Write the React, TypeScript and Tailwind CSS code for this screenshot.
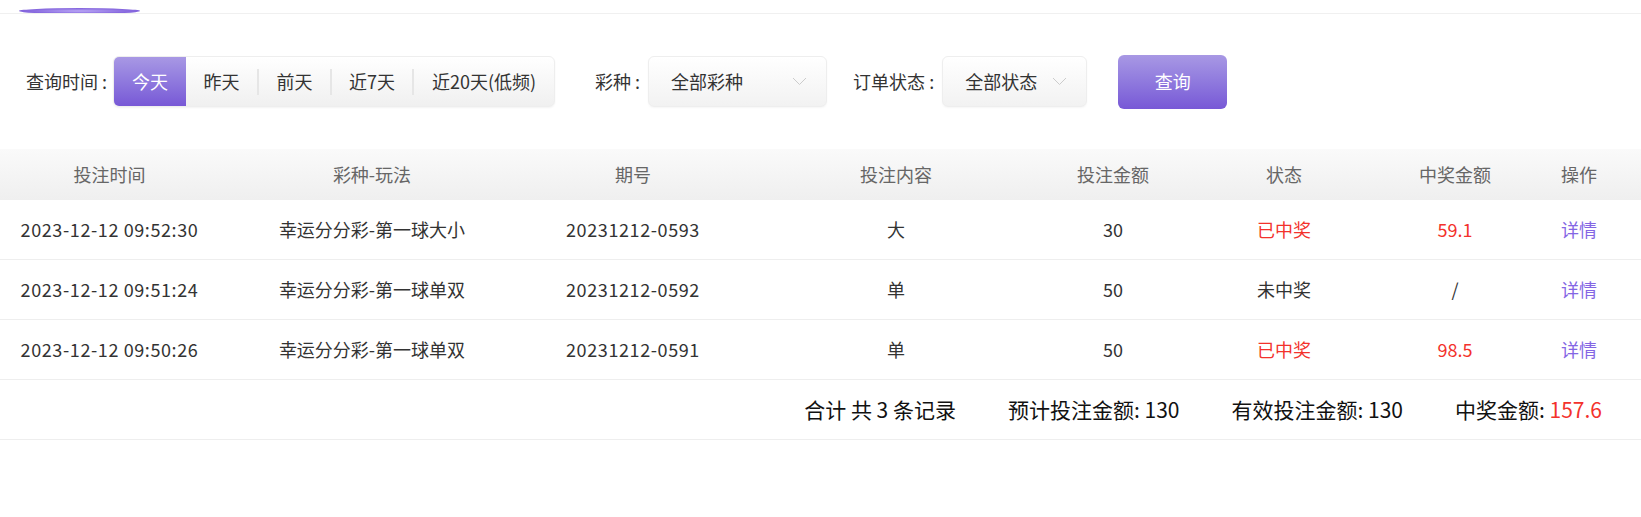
import { useState } from 'react'

const ranges = ['今天', '昨天', '前天', '近7天', '近20天(低频)']
const rangeW = ['w-[72px]', 'w-[71px]', 'w-[71px]', 'w-[80px]', 'w-[140px]']

const cols = [
  { title: '投注时间', w: 'w-[219px]' },
  { title: '彩种-玩法', w: 'w-[306px]' },
  { title: '期号', w: 'w-[216px]' },
  { title: '投注内容', w: 'w-[310px]' },
  { title: '投注金额', w: 'w-[124px]' },
  { title: '状态', w: 'w-[218px]' },
  { title: '中奖金额', w: 'w-[124px]' },
  { title: '操作', w: 'w-[124px]' },
]

const rows = [
  { time: '2023-12-12 09:52:30', game: '幸运分分彩-第一球大小', issue: '20231212-0593', content: '大', amount: '30', won: true, prize: '59.1' },
  { time: '2023-12-12 09:51:24', game: '幸运分分彩-第一球单双', issue: '20231212-0592', content: '单', amount: '50', won: false, prize: '/' },
  { time: '2023-12-12 09:50:26', game: '幸运分分彩-第一球单双', issue: '20231212-0591', content: '单', amount: '50', won: true, prize: '98.5' },
]

function Chevron() {
  return (
    <svg width="15" height="9" viewBox="0 0 15 9" fill="none" className="shrink-0">
      <path d="M1 1l6.5 6.5L14 1" stroke="#cccccc" strokeWidth="1" />
    </svg>
  )
}

function Select({ value, w }: { value: string; w: string }) {
  return (
    <div className={`${w} h-[51px] flex items-center justify-between pl-[22px] pr-[19px] rounded-[6px] border border-[#eeeeee] bg-gradient-to-b from-white to-[#f2f2f2] shadow-[0_1px_2px_rgba(0,0,0,0.04)]`}>
      <span className="text-[18px] text-[#333]">{value}</span>
      <Chevron />
    </div>
  )
}

export default function App() {
  const [range, setRange] = useState(0)

  return (
    <main className="w-[1641px] h-[517px] bg-white overflow-hidden" style={{ fontFamily: '"Microsoft YaHei", "Noto Sans CJK SC", "Noto Sans", sans-serif' }}>
      {/* 顶部标签 */}
      <div className="h-[14px] border-b border-[#f0f0f0] overflow-hidden relative">
        <div className="absolute left-[19px] top-[8px] w-[121px] h-[6px] rounded-[50%] bg-[radial-gradient(ellipse_at_center,#bba8f6_0%,#8a6ce0_55%,#7454d4_100%)]" />
      </div>

      {/* 筛选 */}
      <div className="flex items-center pl-[26px] mt-[42px] h-[51px] text-[18px] text-[#333]">
        <span className="mr-[6px]">查询时间 :</span>
        <div className="flex items-center h-[51px] rounded-[6px] border border-[#eeeeee] bg-gradient-to-b from-white to-[#f0f0f0] shadow-[0_1px_2px_rgba(0,0,0,0.05)] overflow-hidden">
          {ranges.map((r, i) => (
            <div key={r} className="flex items-center h-full">
              {i > 1 && <span className="w-[2px] h-[26px] bg-[#e6e6e6]" />}
              <button
                onClick={() => setRange(i)}
                className={`h-full whitespace-nowrap ${rangeW[i]} ${range === i ? 'bg-gradient-to-b from-[#a898e4] to-[#7858d6] text-white' : 'text-[#333]'}`}
              >
                {r}
              </button>
            </div>
          ))}
        </div>

        <span className="ml-[40px] mr-[8px]">彩种 :</span>
        <Select value="全部彩种" w="w-[179px]" />

        <span className="ml-[26px] mr-[8px]">订单状态 :</span>
        <Select value="全部状态" w="w-[145px]" />

        <button className="ml-[31px] w-[109px] h-[54px] rounded-[6px] bg-gradient-to-b from-[#a898e4] to-[#7858d6] text-white text-[18px]">
          查询
        </button>
      </div>

      {/* 表格 */}
      <div className="mt-[42px]">
        <div className="flex h-[51px] items-center bg-gradient-to-b from-[#fafafa] to-[#efefef] text-[18px] text-[#666]">
          {cols.map((c) => (
            <div key={c.title} className={`${c.w} text-center`}>{c.title}</div>
          ))}
        </div>

        {rows.map((r) => (
          <div key={r.issue} className="flex h-[60px] items-center border-b border-[#eeeeee] text-[18px] text-[#333]">
            <div className="w-[219px] text-center tracking-[0.6px]">{r.time}</div>
            <div className="w-[306px] text-center">{r.game}</div>
            <div className="w-[216px] text-center tracking-[0.6px]">{r.issue}</div>
            <div className="w-[310px] text-center">{r.content}</div>
            <div className="w-[124px] text-center">{r.amount}</div>
            <div className={`w-[218px] text-center ${r.won ? 'text-[#f3322c]' : ''}`}>{r.won ? '已中奖' : '未中奖'}</div>
            <div className={`w-[124px] text-center ${r.won ? 'text-[#f3322c]' : ''}`}>{r.prize}</div>
            <div className="w-[124px] text-center text-[#8466e4]">详情</div>
          </div>
        ))}

        <div className="flex h-[60px] items-center justify-end gap-[52px] pr-[39px] border-b border-[#eeeeee] text-[21px] text-[#111]">
          <span>合计 共 3 条记录</span>
          <span>预计投注金额: 130</span>
          <span>有效投注金额: 130</span>
          <span>中奖金额: <span className="text-[#f3322c]">157.6</span></span>
        </div>
      </div>
    </main>
  )
}
